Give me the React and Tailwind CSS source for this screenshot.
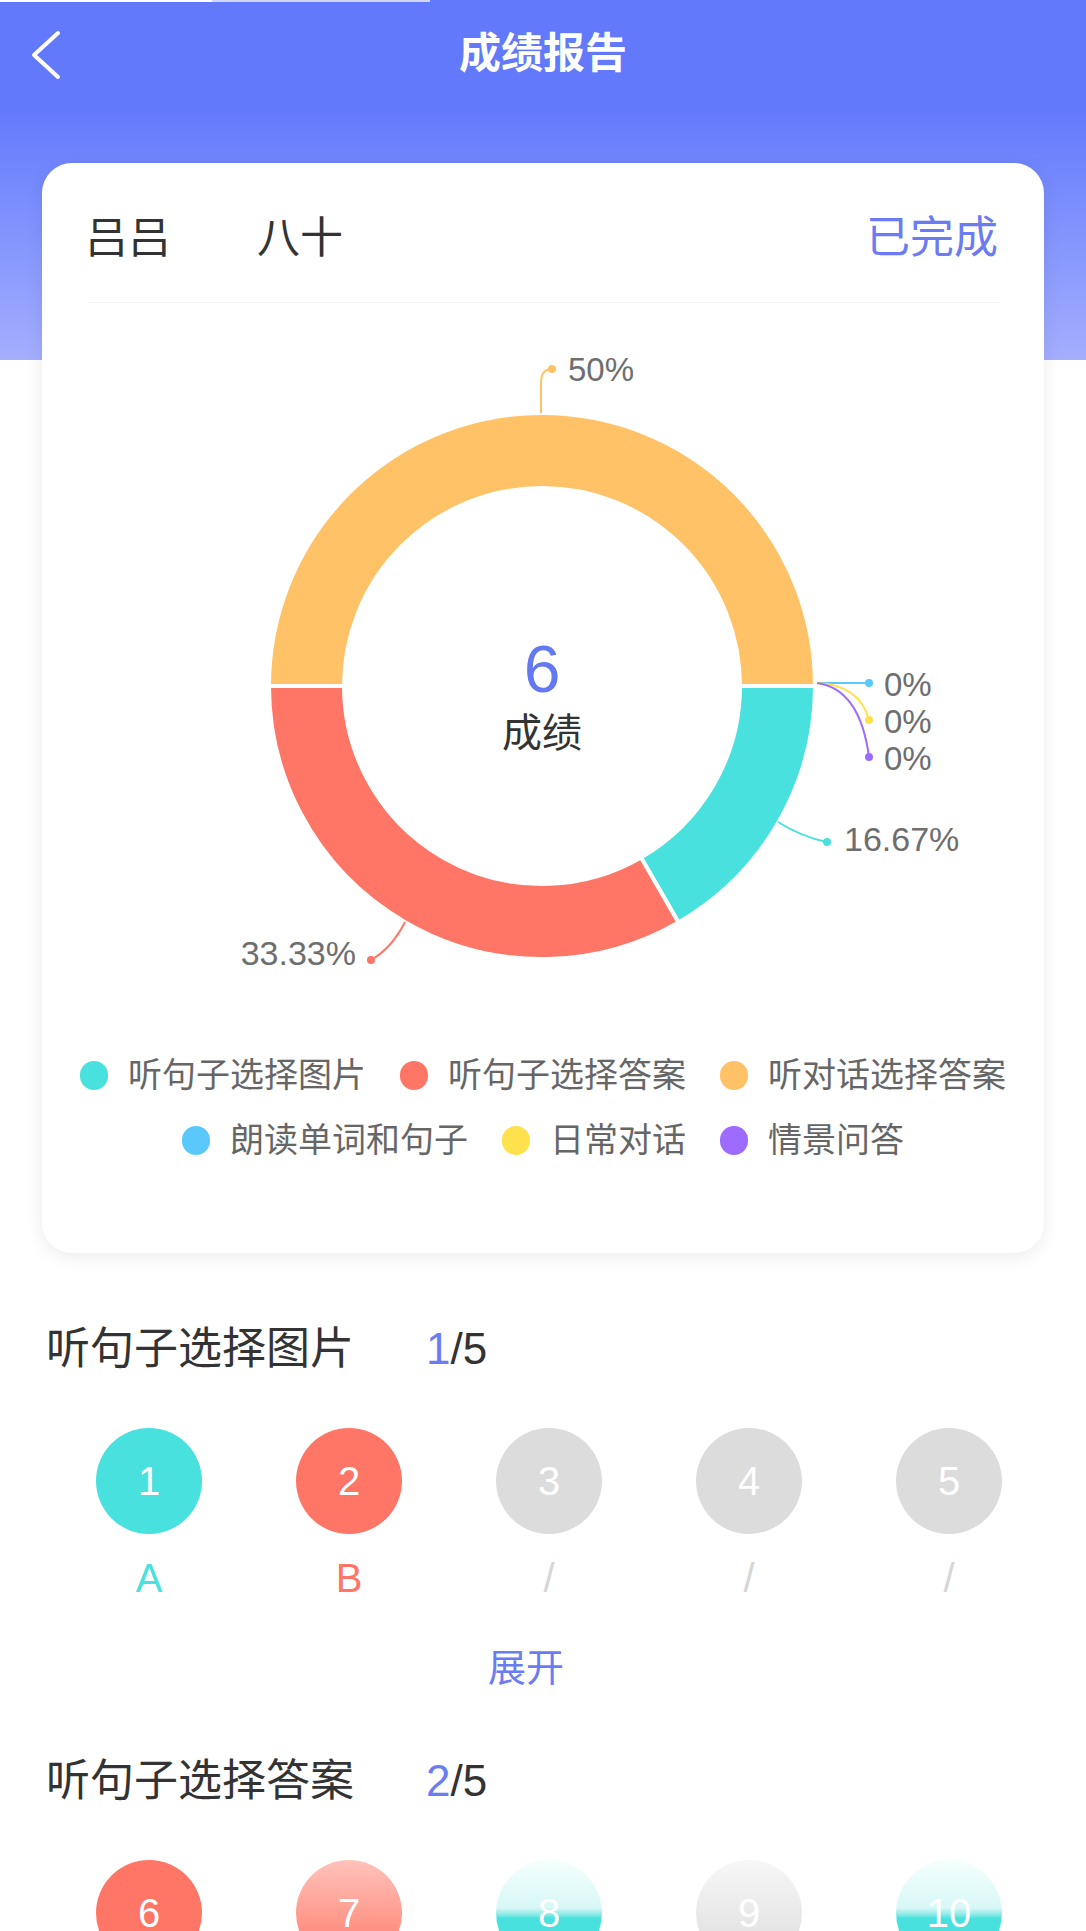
import React from 'react';

const CX = 500;
const CY = 383;
const R0 = 198;
const R1 = 273;

const pt = (r, a) => {
  const rad = (a * Math.PI) / 180;
  return [CX + r * Math.cos(rad), CY + r * Math.sin(rad)];
};

const arcPath = (a0, a1) => {
  const large = a1 - a0 > 180 ? 1 : 0;
  const [x0, y0] = pt(R1, a0);
  const [x1, y1] = pt(R1, a1);
  const [x2, y2] = pt(R0, a1);
  const [x3, y3] = pt(R0, a0);
  return `M${x0} ${y0} A${R1} ${R1} 0 ${large} 1 ${x1} ${y1} L${x2} ${y2} A${R0} ${R0} 0 ${large} 0 ${x3} ${y3} Z`;
};

const slices = [
  { color: '#48e1de', from: 0, to: 60 },
  { color: '#ff7566', from: 60, to: 180 },
  { color: '#ffc266', from: 180, to: 360 },
];

const legendRows = [
  [
    { label: '听句子选择图片', color: '#48e1de' },
    { label: '听句子选择答案', color: '#ff7566' },
    { label: '听对话选择答案', color: '#ffc266' },
  ],
  [
    { label: '朗读单词和句子', color: '#5ac8fa' },
    { label: '日常对话', color: '#ffe14d' },
    { label: '情景问答', color: '#9d6bff' },
  ],
];

const DonutChart = () => (
  <svg width="1000" height="690" viewBox="0 0 1000 690" className="block">
    {slices.map((s, i) => (
      <path key={i} d={arcPath(s.from, s.to)} fill={s.color} stroke="#fff" strokeWidth="4" />
    ))}

    {/* 50% */}
    <path d="M499 110 L499 80 Q499 66 510 66" fill="none" stroke="#ffc266" strokeWidth="2" />
    <circle cx="510" cy="66" r="4" fill="#ffc266" />
    <text x="526" y="66" fontSize="33" fill="#6e6e6e" dominantBaseline="central">50%</text>

    {/* 16.67% */}
    <path d="M736 519 Q760 534 785 539" fill="none" stroke="#48e1de" strokeWidth="2" />
    <circle cx="785" cy="539" r="4" fill="#48e1de" />
    <text x="802" y="536" fontSize="34" fill="#6e6e6e" dominantBaseline="central">16.67%</text>

    {/* 33.33% */}
    <path d="M363 619 Q350 645 329 657" fill="none" stroke="#ff7566" strokeWidth="2" />
    <circle cx="329" cy="657" r="4" fill="#ff7566" />
    <text x="314" y="650" fontSize="34" fill="#6e6e6e" textAnchor="end" dominantBaseline="central">33.33%</text>

    {/* 0% labels */}
    <path d="M775 380 L827 380" fill="none" stroke="#5ac8fa" strokeWidth="2" />
    <path d="M775 380 Q818 382 827 417" fill="none" stroke="#ffe14d" strokeWidth="2" />
    <path d="M775 380 Q818 386 827 454" fill="none" stroke="#9d6bff" strokeWidth="2" />
    <circle cx="827" cy="380" r="4" fill="#5ac8fa" />
    <circle cx="827" cy="417" r="4" fill="#ffe14d" />
    <circle cx="827" cy="454" r="4" fill="#9d6bff" />
    <text x="842" y="381" fontSize="33" fill="#6e6e6e" dominantBaseline="central">0%</text>
    <text x="842" y="418" fontSize="33" fill="#6e6e6e" dominantBaseline="central">0%</text>
    <text x="842" y="455" fontSize="33" fill="#6e6e6e" dominantBaseline="central">0%</text>

    {/* center */}
    <text x="500" y="366" fontSize="66" fill="#6478f0" textAnchor="middle" dominantBaseline="central">6</text>
    <text x="500" y="430" fontSize="40" fill="#333" textAnchor="middle" dominantBaseline="central">成绩</text>
  </svg>
);

const QuestionRow = ({ items }) => (
  <div className="grid grid-cols-[repeat(5,200px)] pl-[49px]">
    {items.map((q) => (
      <div key={q.no} className="flex flex-col items-center">
        <div className={`w-[106px] h-[106px] rounded-full flex items-center justify-center text-white text-[40px] ${q.bg}`}>
          {q.no}
        </div>
        {q.answer !== undefined && (
          <div className={`mt-[20px] text-[40px] leading-[48px] ${q.text}`}>{q.answer}</div>
        )}
      </div>
    ))}
  </div>
);

const section1 = [
  { no: 1, bg: 'bg-[#48e1de]', answer: 'A', text: 'text-[#48e1de]' },
  { no: 2, bg: 'bg-[#ff7566]', answer: 'B', text: 'text-[#ff7566]' },
  { no: 3, bg: 'bg-[#dcdcdc]', answer: '/', text: 'text-[#d6d6d6]' },
  { no: 4, bg: 'bg-[#dcdcdc]', answer: '/', text: 'text-[#d6d6d6]' },
  { no: 5, bg: 'bg-[#dcdcdc]', answer: '/', text: 'text-[#d6d6d6]' },
];

const section2 = [
  { no: 6, bg: 'bg-[#ff7566]' },
  { no: 7, bg: 'bg-linear-to-b from-[#ffc2bb] to-[#ff7566]' },
  { no: 8, bg: 'bg-linear-to-b from-[#f4fffd] via-[#d8f8f7] via-45% to-[#48e1de] to-55%' },
  { no: 9, bg: 'bg-linear-to-b from-[#f7f7f7] to-[#dcdcdc]' },
  { no: 10, bg: 'bg-linear-to-b from-[#f4fffd] via-[#d8f8f7] via-45% to-[#48e1de] to-55%' },
];

const App = () => {
  return (
    <div className="w-[1086px] h-[1931px] overflow-hidden bg-white font-['Liberation_Sans','Noto_Sans_CJK_SC',sans-serif]">
      {/* header */}
      <div className="h-[360px] bg-linear-to-b from-[#6379fc] from-30% to-[#a4aefd]">
        <div className="flex h-[2px]">
          <div className="w-[212px] bg-white" />
          <div className="w-[218px] bg-white/70" />
        </div>
        <div className="relative h-[108px] flex items-center justify-center">
          <svg width="32" height="50" viewBox="0 0 32 50" className="absolute left-[30px] top-[28px]">
            <polyline points="28,3 4,25 28,47" fill="none" stroke="#fff" strokeWidth="4" strokeLinecap="round" strokeLinejoin="round" />
          </svg>
          <h1 className="text-[42px] font-bold text-white -mt-[6px]">成绩报告</h1>
        </div>
      </div>

      {/* summary card */}
      <div className="relative -mt-[197px] mx-[42px] bg-white rounded-[30px] shadow-[0_4px_18px_rgba(0,0,0,0.08)] pb-[93px]">
        <div className="flex items-center pt-[54px] pb-[43px] pl-[43px] pr-[46px] text-[43px] leading-[42px]">
          <span className="text-[#333]">吕吕</span>
          <span className="text-[#333] ml-[86px]">八十</span>
          <span className="ml-auto text-[#6b7cf2] text-[44px]">已完成</span>
        </div>
        <div className="mx-[45px] h-px bg-[#f3f3f3]" />
        <DonutChart />
        <div className="mt-[62px] flex flex-col items-center gap-[25px]">
          {legendRows.map((row, i) => (
            <div key={i} className="flex items-center gap-[34px]">
              {row.map((l) => (
                <div key={l.label} className="flex items-center gap-[20px]">
                  <span className="w-[28px] h-[29px] rounded-full" style={{ backgroundColor: l.color }} />
                  <span className="text-[34px] leading-[40px] text-[#666]">{l.label}</span>
                </div>
              ))}
            </div>
          ))}
        </div>
      </div>

      {/* section 1 */}
      <div className="mt-[74px] px-[46px] flex items-center text-[44px] leading-[44px]">
        <span className="text-[#333]">听句子选择图片</span>
        <span className="ml-[72px] text-[#333]"><span className="text-[#6b7cf2]">1</span>/5</span>
      </div>
      <div className="mt-[57px]">
        <QuestionRow items={section1} />
      </div>
      <div className="mt-[47px] text-center text-[38px] leading-[38px] text-[#6b7cf2] pr-[34px]">展开</div>

      {/* section 2 */}
      <div className="mt-[72px] px-[46px] flex items-center text-[44px] leading-[44px]">
        <span className="text-[#333]">听句子选择答案</span>
        <span className="ml-[72px] text-[#333]"><span className="text-[#6b7cf2]">2</span>/5</span>
      </div>
      <div className="mt-[57px]">
        <QuestionRow items={section2} />
      </div>
    </div>
  );
};

export default App;
